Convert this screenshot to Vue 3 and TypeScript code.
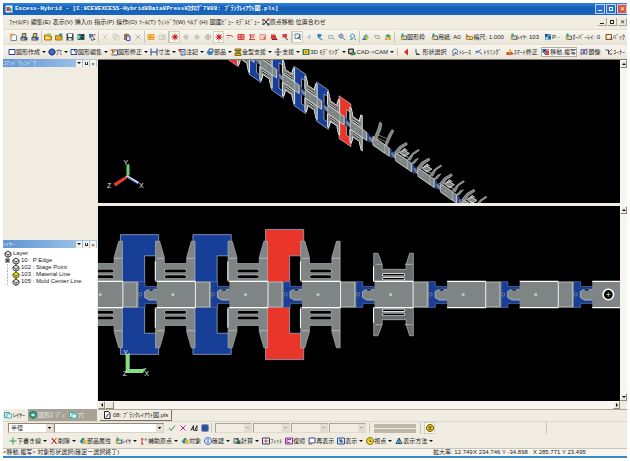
<script setup lang="ts">
import { h, ref, type FunctionalComponent } from 'vue'

type Shape = [d: string, fill: string, stroke?: string]

const icons: Record<string, Shape[]> = {
  app: [['M1 1h14v14H1z', '#e9f2ff'], ['M3 4h6v8H3z', '#d23a3a'], ['M8 3l6 6-4 5z', '#2c9a46']],
  new: [['M4 3h8l3 3v9H4z', '#fff', '#6a84b8'], ['M1 1l3 1 2-2 1 3 3 1-3 2-1 3-2-2-3 0 1-3z', '#f5a623']],
  printer: [['M1 8h13v7H1z', '#4c4f58'], ['M5 1h7l-1 7H4z', '#e8c45a', '#55585f'], ['M10 8h5v6h-5z', '#2f5ca8'], ['M3 11h6v2H3z', '#fff']],
  folder: [['M1 4h5l2 2h7v8H1z', '#f3b62c', '#a87410'], ['M6 1h8v5H6z', '#9cc653'], ['M3 9h8v3H3z', '#fff3ba']],
  folder2: [['M1 5h5l2 2h6v7H1z', '#f0a928', '#a87410'], ['M8 1h7v7H8z', '#4aa36a'], ['M9 2h3v3H9z', '#3b6fd0']],
  save: [['M1 1h14v14H1z', '#3c4c56'], ['M4 2h8v6H4z', '#f4f4f4'], ['M5 10h6v5H5z', '#dfe6e8']],
  build: [['M1 2h14v12H1z', '#33646c'], ['M2 3l5 5-5 5z', '#7be0cf'], ['M9 3h5v3H9zM8 9h6v3H8z', '#16262e']],
  pointer: [['M2 2h8v7H2z', '#4b77bd'], ['M8 5l6 8h-4l-1 3-4-7z', '#e4e8ef', '#5a6576'], ['M11 2h4v3h-4z', '#d55']],
  axis: [['M3 2l10 12M13 2L3 14M2 2v5M2 9v5', 'none', '#222'], ['M10 1h5v4h-5z', '#d33'], ['M10 10h5v5h-5z', '#2f5ca8']],
  cut: [['M3 2l9 11M13 2L4 13', 'none', '#cfcbc0']],
  copy: [['M2 2h7v9H2zM6 5h8v9H6z', '#f5f2e9', '#d2cdbf']],
  paste: [['M2 2h10v12H2z', '#a8743a'], ['M7 6h7v9H7z', '#dbe6fa', '#3b5ca8'], ['M5 1h4v3H5z', '#888']],
  delgray: [['M3 3l10 10M13 3L3 13', 'none', '#bdb9ae']],
  undo: [['M2 3h12v10H2z', '#f8d99a', '#ea9a1f'], ['M3 8l5-4v3h5v3H8v3z', '#ef8c12']],
  redo: [['M2 4h12v9H2z', '#ece8dc', '#cbc6b8'], ['M12 8L8 5v6z', '#bbb6a8']],
  sun: [['M8 1v14M1 8h14M3 3l10 10M13 3L3 13', 'none', '#e02a25'], ['M5 5h6v6H5z', '#c81f1f']],
  star: [['M8 2v12M2 8h12M4 4l8 8M12 4l-8 8', 'none', '#c1bdb2']],
  ring: [['M8 3a5 5 0 1 0 .1 0M8 3v10M3 8h10', 'none', '#b2aea4']],
  line: [['M1 5h9l4 3', 'none', '#e04a42'], ['M2 10h4', 'none', '#e8a9a0']],
  snapA: [['M2 3h12v10H2z', '#f5b6ae', '#dd3a33'], ['M3 8h10M8 4v8', 'none', '#cf2620']],
  snapB: [['M2 4h12M4 8h9M2 13h12M5 3v10', 'none', '#d9443e']],
  snapC: [['M2 3h11v10H2z', '#f9dcd5', '#e58d84'], ['M9 7h4v6H9z', '#e6625b']],
  snapD: [['M2 3h9v9H2z', '#e33a31'], ['M10 6l4 8M4 13h10', 'none', '#8c1f1b']],
  snapE: [['M3 2h9v7H3z', '#e33a31'], ['M7 8l7 6', 'none', '#444']],
  zoomwin: [['M2 2h9v9H2z', 'none', '#5b84a8'], ['M7 7l7 7M12 3v7', 'none', '#3a6485']],
  fitgray: [['M9 3v10M4 8h8', 'none', '#a9bed0']],
  zoomBlue: [['M3 2h7v6H3z', '#2286c8'], ['M4 8l9 6', 'none', '#1b6ca8'], ['M10 3l3 3', 'none', '#38b0dc']],
  pan: [['M3 5h9v6H3z', '#dbe2e8', '#a9b7c2'], ['M12 11l3 3', 'none', '#9ab']],
  lens: [['M6 2a4 4 0 1 0 .1 0M9 9l5 5', 'none', '#3c78ad'], ['M4 5h4v2H4z', '#d4453f']],
  lens2: [['M7 2a4 4 0 1 0 .1 0M10 10l4 4', 'none', '#2e95b2'], ['M2 11h5v3H2z', '#4cbb9b']],
  layers: [['M2 8l6-6 5 5-5 6z', '#2bb0a5'], ['M8 5l6 4-3 5-5-3z', '#e0bd32'], ['M1 11h7v3H1z', '#2a5db0']],
  layersG: [['M3 5h9l2 6H6z', '#dce3d6', '#aeb6a5']],
  layers2: [['M2 6l6-4 6 4-6 4z', '#44a05c'], ['M7 8h7v6H7z', '#e9ae37'], ['M3 9l4 5-5-1z', '#de4f34']],
  sheet: [['M5 6h10v7H5z', '#d7e6f6', '#47709c'], ['M2 10l5-3 4 5-6 2z', '#e7b62d'], ['M5 1h4v6H5z', '#2fa466']],
  scale: [['M3 7h12v6H3z', '#f3dfa0', '#b68820'], ['M1 2l6 3-3 4z', '#ce4a3d'], ['M8 9l5 5', 'none', '#3c6c9d']],
  plate: [['M2 2h12v12H2z', '#5c9ecb'], ['M2 2h5v5H2zM9 7h5v4H9z', '#1a4a80'], ['M4 9h4v4H4z', '#bde9f4']],
  back: [['M2 3h11v10H2z', '#e9d28c', '#7a5522'], ['M5 5h7v6H5z', '#fff'], ['M10 9l5 5', 'none', '#d03e2c']],
  rect: [['M2 3h12v10H2z', '#fff', '#1d3f98']],
  hole: [['M8 1a7 7 0 1 0 .1 0z', '#24459b'], ['M8 5a3 3 0 1 0 .1 0z', '#fff'], ['M8 1v14M1 8h14', 'none', '#24459b']],
  edit: [['M2 13V3h6l6 10z', '#fff', '#244a9c'], ['M8 3h6v6', 'none', '#23439a']],
  fix: [['M5 4h10v10H5z', '#fff', '#2a4fa8'], ['M1 14l8-11 3 3-8 9z', '#f0a22a'], ['M1 2l4 4M5 2L1 6', 'none', '#e8791e']],
  dim: [['M2 1v14M14 1v14M2 8h12', 'none', '#1f3f93']],
  note: [['M6 3h8v11H6z', '#fff', '#3a579f'], ['M1 2h5v5H1z', '#dc3a33'], ['M8 7h4M8 10h4', 'none', '#7289bf']],
  part: [['M1 7l7-3 7 3-3 7H4z', '#3f86cf'], ['M6 2h8v6H6z', '#cfe2f6', '#3b5f96']],
  mold: [['M2 2h12v3H2zM4 6h8v4H4zM2 11h12v4H2z', '#e3b52a', '#7d6a1e']],
  assist: [['M8 1v14M1 8h14M5 4l3-3 3 3M5 12l3 3 3-3', 'none', '#494d55']],
  model: [['M1 2h14v12H1z', '#3e8140'], ['M4 4h8v8H4z', '#f0d530'], ['M6 6h3v3H6z', '#bb3b26']],
  cam: [['M1 2h10v9H1z', '#6e747b', '#333'], ['M3 4h6v5H3z', '#b6e0c1'], ['M8 8h7v6H8z', '#3b8c4e'], ['M3 12l6 3', 'none', '#c53']],
  left: [['M12 1v14L4 8z', '#e02a22']],
  select: [['M4 2v8l7 3M4 13h8', 'none', '#3d4d70']],
  trace: [['M8 2a5 5 0 1 0 .1 0', 'none', '#3f66a5'], ['M8 8l6 6M2 14h5', 'none', '#555f70']],
  trim: [['M1 11L12 3M5 6l9 6M1 7h5', 'none', '#4a6db0']],
  smart: [['M1 8h9v6H1z', '#d94f33'], ['M6 2h3v9H6z', '#efb02d'], ['M10 6l5 6-4 2z', '#8b3b2a']],
  move: [['M1 2h7v7H1z', '#2d4fb0'], ['M7 6h7v8H7z', '#e04034'], ['M3 9l5 5M8 4h6', 'none', '#273a78']],
  mirror: [['M2 3h5v9H2zM9 3h5v9H9z', '#dce6f5', '#4b6db1'], ['M1 14L14 1', 'none', '#d5443c']],
  corner: [['M1 4h6v8h7', 'none', '#31476f'], ['M8 8l6-6', 'none', '#c44']],
  plus: [['M8 1v14M1 8h14', 'none', '#24a066']],
  cross: [['M3 2l10 12M13 2L3 14', 'none', '#e2251e'], ['M4 3l9 10', 'none', '#b3120e']],
  attr: [['M1 9l5-6 5 6-5 5z', '#2e8bc6'], ['M8 6h7v8H8z', '#e2b537'], ['M6 2h5v4H6z', '#2f9d57']],
  origin: [['M4 2v12M2 4h5M2 14h5', 'none', '#cd382c'], ['M9 3h5v4H9z', '#7d98c4']],
  info: [['M8 1a7 7 0 1 0 .1 0z', '#dce9fb', '#3a66c2'], ['M8 4v2M8 7v5', 'none', '#234ba7']],
  calc: [['M2 3h9v9H2z', '#e3efec', '#387a73'], ['M7 7h8v7H7z', '#365f63'], ['M2 13l4-4M5 5h5', 'none', '#d83c33']],
  fit: [['M1 2h14v12H1z', '#fff', '#2b3c78'], ['M8 3v10M3 8h10', 'none', '#d13a31']],
  revert: [['M1 2h14v12H1z', '#f4ddf6', '#6c3a90'], ['M4 5h8M4 5v6h6', 'none', '#a42ba6']],
  redraw: [['M2 2h12v10H2z', '#fff', '#2d4d96'], ['M1 14h7', 'none', '#c53a34']],
  show: [['M1 2h14v12H1z', '#dfecfb', '#2d5092'], ['M8 4v8M4 8h8M5 5l6 6', 'none', '#254f9c']],
  eye: [['M8 1a7 7 0 1 0 .1 0z', '#f0d62c', '#7b6810'], ['M8 5v4h3', 'none', '#5a4910']],
  cone: [['M8 2l6 11H2z', '#9adfe3', '#1d4b7d'], ['M8 3v10', 'none', '#1b3c71']],
  check: [['M2 8l4 5 8-10', 'none', '#219a5a']],
  cancel: [['M3 3l10 10M13 3L3 13', 'none', '#bd2798']],
  num: [['M2 13L7 3v10M3 10h5M9 13l5-10v10z', 'none', '#353535']],
  grid: [['M1 1h14v14H1z', '#3a63ae'], ['M1 6h14M1 10h14M6 1v14M10 1v14', 'none', '#284a8c']],
  coin: [['M8 1a7 7 0 1 0 .1 0z', '#f4d91f', '#5d4a05'], ['M4 6h8M8 6v6M5 11h6', 'none', '#5d4a05']],
  stack: [['M2 6l6-4 6 4v5l-6 4-6-4z', '#e8e8e8', '#333'], ['M2 6l6 4 6-4M8 10v4', 'none', '#555']],
  stackOn: [['M2 6l6-4 6 4v5l-6 4-6-4z', '#f3e126', '#5a5208'], ['M2 6l6 4 6-4M8 10v4', 'none', '#6e640c']],
  file: [['M3 1h8l3 3v11H3z', '#fff', '#222'], ['M5 12l5-7 2 1-5 7z', '#556']],
  tabLayer: [['M1 3h10v10H1z', '#cfeff1', '#2fa7ad'], ['M6 6h9v8H6z', '#fff', '#49b8bd']],
  tabBody: [['M2 3l6-2 6 2v8l-6 4-6-4z', '#2faf8a', '#0f6e58'], ['M5 6h6v4H5z', '#d9f6ee']],
}

const Icon: FunctionalComponent<{ name: string }> = (props) =>
  h(
    'svg',
    { viewBox: '0 0 16 16', class: 'icon', 'aria-hidden': 'true' },
    icons[props.name].map(([d, fill, stroke]) => h('path', { d, fill, stroke, 'stroke-width': stroke ? 2 : 0 })),
  )
Icon.props = ['name']

interface Tool { icon: string; label: string; menu?: boolean; on?: boolean }

const menus = [
  'ﾌｧｲﾙ(F)', '編集(E)', '表示(V)', '挿入(I)', '指示(P)', '操作(O)', 'ﾂｰﾙ(T)', 'ｳｨﾝﾄﾞｳ(W)', 'ﾍﾙﾌﾟ(H)', '図面ﾋﾞｭｰ', 'ﾓﾃﾞﾙﾋﾞｭｰ',
]

const iconGroups: string[][] = [
  ['new', 'printer', 'printer'],
  ['folder', 'folder2', 'save', 'build', 'pointer'],
  ['cut', 'copy', 'paste', 'delgray'],
  ['undo', 'redo'],
  ['sun', 'star', 'star', 'ring', 'sun', 'line', 'snapA', 'snapB', 'snapC', 'snapD', 'snapE'],
  ['zoomwin', 'fitgray', 'zoomBlue', 'pan', 'lens', 'lens2'],
  ['layers', 'layersG', 'layers2'],
]

const infoTools: Tool[] = [
  { icon: 'sheet', label: '図形枠' },
  { icon: 'sheet', label: '用紙: A0' },
  { icon: 'scale', label: '縮尺: 1.000' },
  { icon: 'sheet', label: 'ﾚｲﾔ: 103' },
  { icon: 'plate', label: 'P -' },
  { icon: 'sheet', label: 'ｵｰﾊﾞｰﾚｲ: 0' },
  { icon: 'back', label: 'ﾊﾞｯｸ' },
]

const drawTools: Tool[] = [
  { icon: 'rect', label: '図形作成', menu: true },
  { icon: 'hole', label: '穴', menu: true },
  { icon: 'edit', label: '図形編集', menu: true },
  { icon: 'fix', label: '図形修正', menu: true },
  { icon: 'dim', label: '寸法', menu: true },
  { icon: 'note', label: '注記', menu: true },
  { icon: 'part', label: '部品', menu: true },
  { icon: 'mold', label: '金型支援', menu: true },
  { icon: 'assist', label: '支援', menu: true },
  { icon: 'model', label: '3D ﾓﾃﾞﾘﾝｸﾞ', menu: true },
  { icon: 'cam', label: 'CAD->CAM', menu: true },
]

const editTools: Tool[] = [
  { icon: 'left', label: '' },
  { icon: 'select', label: '形状選択' },
  { icon: 'trace', label: 'ﾄﾚｰｽ' },
  { icon: 'trim', label: 'ﾄﾘﾐﾝｸﾞ' },
  { icon: 'smart', label: 'ｽﾏｰﾄ修正' },
  { icon: 'move', label: '移動,複写', on: true },
  { icon: 'mirror', label: '鏡像' },
  { icon: 'corner', label: 'ｺｰﾅｰ' },
]

const viewTools: Tool[] = [
  { icon: 'plus', label: '下書き線', menu: true },
  { icon: 'cross', label: '削除', menu: true },
  { icon: 'attr', label: '部品属性' },
  { icon: 'sheet', label: 'ﾚｲﾔ', menu: true },
  { icon: 'origin', label: '補助原点', menu: true },
  { icon: 'attr', label: '対象' },
  { icon: 'info', label: '確認', menu: true },
  { icon: 'calc', label: '計算', menu: true },
  { icon: 'fit', label: 'ﾌｨｯﾄ' },
  { icon: 'revert', label: '復帰' },
  { icon: 'redraw', label: '再表示' },
  { icon: 'show', label: '表示', menu: true },
  { icon: 'eye', label: '視点', menu: true },
  { icon: 'cone', label: '表示方法', menu: true },
]

const layers = [
  { id: '10', name: 'P Edge', icon: 'stack', expand: true },
  { id: '102', name: 'Stage Point', icon: 'stack' },
  { id: '103', name: 'Material Line', icon: 'stackOn' },
  { id: '105', name: 'Mold Center Line', icon: 'stack' },
]

const shape = ref('半径')
const extra = ref('')

/* Strip layout: x of each station's pilot point, one pitch apart. */
const PITCH = 72.15
const CENTER = 295
const stationX = (i: number) => 100.3 + i * PITCH
const winged = [0, 1, 2, 3]
const blocks = [
  { x: 120.3, half: 59.5, color: '#173f98' },
  { x: 192.4, half: 59.5, color: '#173f98' },
  { x: 264.5, half: 64.7, color: '#e9352a' },
]
const blockPath = (x: number, half: number) =>
  `M${x} ${CENTER - half}h38v${half - 38.5}h-14v77h14v${half - 38.5}h-38z`

const isoBlocks = [-4, -3, -2, -1, 0, 1, 2].map((i) => ({
  x: 120.3 + i * PITCH,
  half: i === 2 ? 64.7 : 59.5,
  color: i === 2 || i === -3 ? '#e9352a' : '#173f98',
}))
const isoWinged = [-4, -3, -2, -1, 0, 1, 2, 3]
const isoFlat = [4, 5, 6, 7, 8]
const isoPoint = (i: number) => {
  const x = stationX(i)
  return `translate(${0.312 * x + 257.5} ${0.217 * x + 0.33 * CENTER - 38})`
}
</script>

<template>
  <main class="window">
    <header class="title">
      <Icon name="app" />
      <h1>Excess-Hybrid - [C:¥CE¥EXCESS-Hybrid¥Data¥Press¥ｶﾀﾛｸﾞ7¥08: ﾌﾞﾗﾝｸﾚｲｱｳﾄ図.pls]</h1>
      <div class="captions">
        <button aria-label="最小化"><i class="min" /></button>
        <button aria-label="元に戻す"><i class="max" /></button>
        <button class="close" aria-label="閉じる">✕</button>
      </div>
    </header>

    <nav class="menubar">
      <button v-for="m in menus" :key="m">{{ m }}</button>
      <button class="with-icon"><Icon name="axis" />原点移動</button>
      <button>位置合わせ</button>
      <div class="docs">
        <button aria-label="文書を最小化"><i class="min" /></button>
        <button aria-label="文書を元に戻す"><i class="max" /></button>
        <button aria-label="文書を閉じる">✕</button>
      </div>
    </nav>

    <div class="toolbar" role="toolbar">
      <div v-for="(g, gi) in iconGroups" :key="gi" class="group">
        <button v-for="(n, ni) in g" :key="ni" class="square" :class="{ lit: n === 'sun' || n === 'zoomwin' }" :aria-label="n">
          <Icon :name="n" />
        </button>
      </div>
      <div class="group spread">
        <button v-for="t in infoTools" :key="t.label" class="tool"><Icon :name="t.icon" />{{ t.label }}</button>
      </div>
    </div>

    <div class="toolbar" role="toolbar">
      <div class="group labels">
        <button v-for="t in drawTools" :key="t.label" class="tool">
          <Icon :name="t.icon" />{{ t.label }}<i class="down" />
        </button>
      </div>
      <div class="group spread">
        <button v-for="t in editTools" :key="t.icon" class="tool" :class="{ on: t.on }" :aria-label="t.label || '戻る'">
          <Icon :name="t.icon" />{{ t.label }}
        </button>
      </div>
    </div>

    <section class="workspace">
      <aside class="side">
        <section class="pane">
          <header>
            <h2>ｺﾏﾝﾄﾞｳｨﾝﾄﾞｳ</h2>
            <button aria-label="メニュー"><i class="down" /></button>
            <button aria-label="固定"><i class="pin" /></button>
            <button aria-label="閉じる">×</button>
          </header>
          <div class="empty" />
        </section>
        <section class="pane">
          <header>
            <h2>ﾚｲﾔｰ</h2>
            <button aria-label="メニュー"><i class="down" /></button>
            <button aria-label="固定"><i class="pin" /></button>
            <button aria-label="閉じる">×</button>
          </header>
          <div class="tree">
            <p><Icon name="stack" />Layer</p>
            <ul>
              <li v-for="l in layers" :key="l.id">
                <i :class="l.expand ? 'expander' : 'branch'" /><Icon :name="l.icon" />{{ l.id }} : {{ l.name }}
              </li>
            </ul>
          </div>
        </section>
        <div class="side-tabs">
          <button class="active"><Icon name="tabLayer" />ﾚｲﾔｰ</button>
          <button><Icon name="tabBody" />図形ﾎﾞﾃﾞｨ</button>
          <button><Icon name="tabLayer" />穴</button>
        </div>
      </aside>

      <div class="views">
        <svg width="0" height="0" class="defs" aria-hidden="true">
          <defs>
            <g id="wing">
              <path d="M-17.3-13v-40h4.2l4.6 16v6.2h22.2v-6.2l4.6-16h3.7v40z" fill="#7f8584" stroke="#b9bdbc" stroke-width=".6" />
              <path d="M-16.3-36h7.2M14-36h8" stroke="#d5d7d7" stroke-width=".6" />
              <path d="M-17.5-33v19" stroke="#fff" />
              <path d="M-6.5-23.3h18.2M-6.5-17.6h18.2" stroke="#cfd2d1" stroke-width="4" stroke-linecap="round" />
              <path d="M-6.5-23.3h18.2M-6.5-17.6h18.2" stroke="#000" stroke-width="3" stroke-linecap="round" />
            </g>
            <g id="shortwing">
              <path d="M-16.8-13v-28h4.2l4.2 11v5h23.8v-5l3.6-11h3.6v28z" fill="#676d6c" stroke="#b9bdbc" stroke-width=".7" />
              <path d="M-15-30h6M14-30h8" stroke="#d5d7d7" stroke-width=".6" />
              <path d="M-17-28v15" stroke="#fff" />
              <path d="M-7-19.7h20M-7-15.7h20" stroke="#fff" stroke-width="3" stroke-linecap="round" />
              <path d="M-7-19.7h20M-7-15.7h20" stroke="#000" stroke-width="1.6" stroke-linecap="round" />
            </g>
            <g id="body">
              <path d="M-16-12.8v8h-3l-1.5 1.5h-2.5l-1.5-1.5-3.4 2v5.6l4 3h7.9v7h54v-25.6z" fill="#7f8584" />
              <path d="M-16-5h-3l-1.5 1.5h-2.5l-1.5-1.5-3.4 2v6l4 2.4h7.9" fill="none" stroke="#d0d3d2" stroke-width=".6" />
              <path d="M22.4-12.8v25.6" stroke="#eff0f0" />
              <path d="M22.4-12.4h14v24.8h-14" fill="none" stroke="#c4c8c7" stroke-width=".8" />
              <path d="M-16-13h38.5M-16 13h38.5" stroke="#fff" stroke-width="1.2" />
              <circle r="1.6" fill="#c3c5b6" />
            </g>
            <g id="carrier">
              <path d="M36.5-12.8h8v4.8h12v3l-6-.5-6 2.5v6l6 2h6v4h-12v3.8h-8z" fill="#173f98" stroke="#8091bd" stroke-width=".5" />
              <circle cx="39.8" r="1.5" fill="#0d1c42" stroke="#b7c4e5" stroke-width=".6" />
            </g>
          </defs>
        </svg>

        <div class="view upper">
          <svg viewBox="98 60 522 144" preserveAspectRatio="xMinYMin slice" role="img" aria-label="モデルビュー">
            <g transform="matrix(.312 .217 0 .33 256.5 -37.6)">
              <path v-for="b in isoBlocks" :key="b.x" :d="blockPath(b.x, b.half)" :fill="b.color" stroke="#d6dcec" stroke-width="1.6" />
              <g v-for="i in isoWinged" :key="i" :transform="`translate(${stationX(i)} ${CENTER})`">
                <use href="#carrier" />
                <g stroke-linejoin="round">
                  <use href="#wing" />
                  <use href="#wing" transform="scale(1 -1)" />
                  <path d="M-17.3-13v-40h4.2l4.6 16v6h22.2v-6l4.6-16h3.7v40M-17.3 13v40h4.2l4.6-16v-6h22.2v6l4.6 16h3.7v-40" fill="none" stroke="#f1f1f1" stroke-width="2.6" />
                  <path d="M-7-20.500h19M-7 20.500h19" stroke="#fff" stroke-width="2" />
                </g>
                <use href="#body" />
                <path d="M-16-13h52v26h-52z" fill="none" stroke="#dfe1e1" stroke-width="1.6" />
              </g>
              <g v-for="i in isoFlat" :key="i" :transform="`translate(${stationX(i)} ${CENTER})`">
                <use href="#carrier" />
                <use href="#body" />
                <path d="M-16-13h52v26h-52z" fill="none" stroke="#dfe1e1" stroke-width="1.6" />
              </g>
            </g>
            <g v-for="i in isoFlat" :key="i" :transform="isoPoint(i)" fill="#7d8382" stroke="#d9dbdb" stroke-width=".5">
              <template v-if="i === 4">
                <path d="M-5-5l4-10 2-7 2 2-1 6-5 11zM6 1l4-10 3-5 2 1-3 6-4 9z" />
                <path d="M-1-9l9 4M-2-6l9 4" fill="none" stroke="#e8e8e8" />
              </template>
              <template v-else>
                <path d="M-7-7l5-6 7-4 1 2-6 4-4 6zM6 0l5-6 6-4 1 1-6 4-3 6zM10 4l4-4 3-1-4 5z" />
                <path d="M-2-7l5-2 5 3-5 3zM0-8l3-3 3 2M1-5l6 3" stroke="#eee" stroke-width=".8" />
              </template>
            </g>
            <g class="axes">
              <path d="M126.500 175.500v-10l2-2 1 2v10z" fill="#6fce6a" />
              <path d="M126.500 175.500l-13 8 2 3 13-9z" fill="#e23c33" />
              <path d="M127 175l12 7-1 2-12-7z" fill="#d7e4f1" />
              <path d="M127 177l11 7" stroke="#3869c4" />
              <text x="123.500" y="165">Y</text>
              <text x="139" y="188">X</text>
              <text x="107" y="188">Z</text>
            </g>
          </svg>
        </div>
        <div class="vscroll short"><button aria-label="上へ"><i class="up" /></button></div>

        <div class="view lower">
          <svg viewBox="98 207 522 194" preserveAspectRatio="xMinYMin slice" role="img" aria-label="図面ビュー">
            <path v-for="b in blocks" :key="b.x" :d="blockPath(b.x, b.half)" :fill="b.color" stroke="#98a5c4" stroke-width=".8" />
            <g v-for="i in [0, 1, 2, 3, 4, 5, 6, 7]" :key="i" :transform="`translate(${stationX(i)} ${CENTER})`">
              <use href="#carrier" />
              <template v-if="winged.includes(i)">
                <use href="#wing" />
                <use href="#wing" transform="scale(1 -1)" />
              </template>
              <template v-if="i === 4">
                <use href="#shortwing" />
                <use href="#shortwing" transform="scale(1 -1)" />
              </template>
              <use href="#body" />
              <g v-if="i === 7">
                <circle r="5.200" fill="#000" stroke="#fff" stroke-width="1.600" />
                <path d="M-2 0h4M0-2v4" stroke="#9acb62" />
              </g>
            </g>
            <g class="axes">
              <path d="M125.500 371v-16l4-2v16h12l5-1-4 5h-17z" fill="#86dd86" />
              <text x="123" y="355">Y</text>
              <text x="144" y="376">X</text>
              <text x="122.500" y="376">Z</text>
            </g>
          </svg>
        </div>
        <div class="vscroll"><button aria-label="上へ"><i class="up" /></button><button aria-label="下へ"><i class="down" /></button></div>

        <div class="hscroll"><button aria-label="左へ"><i class="prev" /></button><span class="thumb" /><button class="last" aria-label="右へ"><i class="next" /></button></div>
        <div class="doc-tabs"><button><Icon name="file" />08: ﾌﾞﾗﾝｸﾚｲｱｳﾄ図.pls</button></div>
      </div>
    </section>

    <div class="inputs">
      <select v-model="shape" class="kind" aria-label="形状"><option>半径</option></select>
      <select v-model="extra" class="value" aria-label="値"><option value="" /></select>
      <button v-for="n in ['check', 'cancel', 'num', 'grid']" :key="n" class="square" :aria-label="n"><Icon :name="n" /></button>
      <div class="disabled">
        <select v-for="n in 4" :key="n" disabled :aria-label="`項目 ${n}`"><option /></select>
      </div>
      <span class="linestyle"><i /></span>
      <div class="last-group"><button class="square lit" aria-label="単位"><Icon name="coin" /></button></div>
    </div>

    <div class="viewbar" role="toolbar">
      <button v-for="(t, i) in viewTools" :key="i" class="tool"><Icon :name="t.icon" />{{ t.label }}<i v-if="t.menu" class="down" /></button>
    </div>

    <footer class="status">
      <p>&lt;移動,複写&gt; 対象形状選択(確定ー選択終了)</p>
      <output>拡大率: 12.749</output>
      <output>X 234.746 Y -34.898</output>
      <output class="end">X 285.771 Y 23.495</output>
    </footer>
  </main>
</template>

<style>
body {
  background: #fff;
}
</style>

<style scoped>
* {
  box-sizing: border-box;
  margin: 0;
  padding: 0;
}

.window {
  display: flex;
  flex-direction: column;
  height: 100vh;
  padding: 3px;
  font: 6px/8px 'Liberation Sans', 'Noto Sans CJK JP', sans-serif;
  color: #222;
  white-space: nowrap;
  overflow: hidden;
}

button,
select {
  font: inherit;
  color: inherit;
  border: 0;
  background: none;
  border-radius: 0;
}

i {
  display: inline-block;
  flex: none;
}

.icon {
  width: 8px;
  height: 8px;
  flex: none;
}

.down {
  border: 2px solid transparent;
  border-top-color: #111;
  border-bottom-width: 0;
}

.up {
  border: 2px solid transparent;
  border-bottom-color: #111;
  border-top-width: 0;
}

.prev {
  border: 2px solid transparent;
  border-right-color: #111;
  border-left-width: 0;
}

.next {
  border: 2px solid transparent;
  border-left-color: #111;
  border-right-width: 0;
}

.min {
  width: 4px;
  height: 4px;
  border-bottom: 1px solid;
}

.max {
  width: 4px;
  height: 4px;
  border: 1px solid;
}

.title {
  display: flex;
  align-items: center;
  gap: 2px;
  flex: none;
  height: 12px;
  padding-left: 2px;
  background: linear-gradient(#2f85dd, #145fb5 40%, #1967bd);
  color: #fff;
}

.title h1 {
  flex: 1;
  font: bold 6px/12px 'Liberation Mono', 'Noto Sans CJK JP', monospace;
}

.captions,
.docs {
  display: flex;
  gap: 1px;
}

.captions button {
  display: grid;
  place-items: center;
  width: 10px;
  height: 10px;
  border: 1px solid #bcd2f2;
  background: #2d6fd0;
  color: #fff;
}

.captions .close {
  background: #dd5634;
}

.menubar {
  display: flex;
  align-items: center;
  gap: 2px;
  flex: none;
  height: 14px;
  padding-left: 6px;
  background: #f0ece1;
}

.menubar .with-icon {
  display: flex;
  align-items: center;
}

.docs {
  margin-left: auto;
}

.docs button {
  display: grid;
  place-items: center;
  width: 9px;
  height: 8px;
  border-right: 1px solid #aaa698;
  border-bottom: 1px solid #aaa698;
}

.toolbar {
  display: flex;
  align-items: center;
  flex: none;
  height: 15px;
  padding-left: 4px;
  border-top: 1px solid #e3dece;
  background: linear-gradient(#f8f6f0, #eae5d8);
  overflow: hidden;
}

.toolbar .group {
  display: flex;
  align-items: center;
  padding-right: 1px;
  border-right: 1px solid #cbc5b4;
}

.toolbar .labels {
  gap: 2px;
  padding: 0 3px 0 1px;
}

.toolbar .spread {
  flex: 1;
  justify-content: space-between;
  padding: 0 2px 0 4px;
  border-right: 0;
}

.square {
  display: grid;
  place-items: center;
  width: 11px;
  height: 12px;
}

.lit {
  background: #faf8f3;
  box-shadow: inset 0 0 0 1px #d3cdbc;
}

.tool {
  display: flex;
  align-items: center;
}

.tool .down {
  margin-left: 2px;
}

.tool.on {
  background: #faf8f3;
  box-shadow: 0 0 0 1px #b4ae9f;
}

.workspace {
  display: grid;
  grid-template-columns: 94px minmax(0, 1fr);
  gap: 1px;
  flex: 1;
  min-height: 0;
  background: #f0ece1;
}

.side {
  display: grid;
  grid-template-rows: 181px 1fr 12px;
  grid-template-columns: minmax(0, 1fr);
  min-height: 0;
}

.pane {
  display: flex;
  flex-direction: column;
  min-height: 0;
}

.pane header {
  display: flex;
  align-items: center;
  gap: 1px;
  height: 8px;
  padding-right: 1px;
  background: linear-gradient(90deg, #5e94d2, #a9cbee);
}

.pane h2 {
  flex: 1;
  font-weight: normal;
  font-size: 6px;
  color: #d8e8fa;
}

.pane header button {
  display: grid;
  place-items: center;
  width: 6px;
  height: 7px;
  background: #f5f2ea;
}

.pin {
  width: 3px;
  height: 3px;
  border: 1px solid #333;
  border-top: 0;
}

.empty {
  flex: 1;
  background: #f0ece1;
}

.tree {
  flex: 1;
  padding: 2px 1px;
  background: #fff;
  font: 6px/7px 'Liberation Sans Narrow', 'Liberation Sans', sans-serif;
}

.tree p,
.tree li {
  display: flex;
  align-items: center;
  gap: 1px;
  height: 7px;
}

.tree ul {
  list-style: none;
}

.expander {
  width: 5px;
  height: 5px;
  margin: 0 1px;
  border: 1px solid #aaa;
  background: #555;
}

.branch {
  width: 4px;
  height: 7px;
  margin-left: 3px;
  border-left: 1px dotted #aaa;
}

.side-tabs {
  display: flex;
  background: #a6a296;
  color: #eceae2;
}

.side-tabs button {
  display: flex;
  align-items: center;
  gap: 1px;
  padding: 0 3px 0 1px;
}

.side-tabs .active {
  background: #f0ece1;
  color: #222;
}

.views {
  display: grid;
  grid-template-columns: 1fr 7px;
  grid-template-rows: 145fr 194fr 8px 12px;
  min-height: 0;
  border-top: 1px solid #7d786b;
}

.defs {
  position: absolute;
}

.view {
  min-height: 0;
  overflow: hidden;
  background: #000;
}

.view svg {
  display: block;
  width: 100%;
  height: 100%;
}

.upper {
  border-bottom: 3px solid #f0ece1;
}

.axes text {
  font: 7px 'Liberation Sans', sans-serif;
  fill: #e6e6e6;
}

.vscroll {
  display: flex;
  flex-direction: column;
  justify-content: space-between;
  background: #f8f4f0;
}

.vscroll button,
.hscroll button,
.thumb {
  display: grid;
  place-items: center;
  width: 7px;
  height: 8px;
  border: 1px solid #fff;
  border-right-color: #8d897c;
  border-bottom-color: #8d897c;
  background: #ece8dc;
}

.hscroll {
  display: flex;
  background: #f8f4f0;
}

.thumb {
  width: 9px;
}

.hscroll .last {
  margin-left: auto;
}

.doc-tabs {
  grid-column: 1 / -1;
  display: flex;
  padding-left: 2px;
  border-top: 1px solid #aaa698;
}

.doc-tabs button {
  display: flex;
  align-items: center;
  gap: 2px;
  padding: 0 3px;
  border-right: 1px solid #77736a;
  border-bottom: 1px solid #77736a;
}

.inputs {
  display: flex;
  align-items: center;
  flex: none;
  height: 13px;
  padding-left: 5px;
  border-top: 1px solid #dcd7c9;
  background: #f0ece1;
}

.inputs select {
  appearance: none;
  height: 10px;
  padding: 0 2px;
  border: 1px solid #8b8779;
  border-right-color: #d8d3c5;
  border-bottom-color: #d8d3c5;
  background:
    linear-gradient(#222, #222) no-repeat right 3px top 4px / 1px 1px,
    linear-gradient(#222, #222) no-repeat right 2px top 3px / 3px 1px,
    linear-gradient(#e4dfd1, #e4dfd1) no-repeat right 0 top 0 / 7px 8px,
    #fff;
}

.inputs .kind {
  width: 46px;
}

.inputs .value {
  width: 110px;
  margin-right: 2px;
}

.inputs .disabled {
  display: flex;
  gap: 1px;
  margin-left: 1px;
  padding: 0 3px;
  border-left: 1px solid #cbc5b4;
  border-right: 1px solid #cbc5b4;
}

.inputs .disabled select {
  width: 37px;
  background:
    linear-gradient(#8d897c, #8d897c) no-repeat right 2px top 3px / 3px 1px,
    linear-gradient(#ddd8ca, #ddd8ca) no-repeat right 0 top 0 / 7px 8px,
    #f0ece1;
}

.linestyle {
  display: grid;
  align-items: center;
  width: 42px;
  height: 9px;
  margin: 0 4px;
  background: #bdb9aa;
}

.linestyle i {
  height: 1px;
  background: #f0ece1;
}

.last-group {
  width: 127px;
  padding-left: 3px;
  border-left: 1px solid #cbc5b4;
  border-right: 1px solid #cbc5b4;
}

.viewbar {
  display: flex;
  align-items: center;
  gap: 3px;
  flex: none;
  height: 15px;
  padding-left: 6px;
  border-bottom: 1px solid #cbc5b4;
  background: #f0ece1;
}

.status {
  display: grid;
  grid-template-columns: 430px 40px 60px 1fr;
  flex: none;
  height: 9px;
  border-bottom: 2px solid #3b87c6;
  background: #f7f5ee;
  line-height: 7px;
}
</style>
